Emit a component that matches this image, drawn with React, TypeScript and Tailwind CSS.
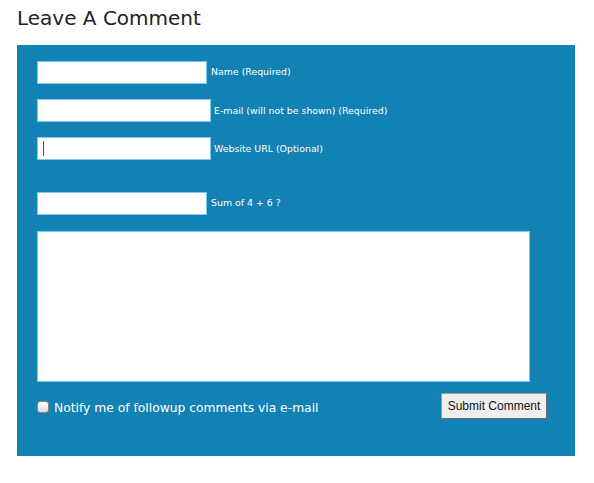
import React from "react";

export default function App() {
  const font = { fontFamily: '"DejaVu Sans", "Noto Sans", sans-serif' };
  return (
    <div className="w-[594px] h-[483px] bg-white" style={font}>
      <div className="pl-[17px] pt-[4px]">
        <h1 className="text-[20px] leading-[28px] text-[#222] font-normal h-[41px]">Leave A Comment</h1>
        <div className="w-[558px] h-[411px] bg-[#1282b4] pl-[20px] pt-[16px] text-white">
          <div className="flex items-center h-[23px]">
            <input className="w-[170px] h-[23px] bg-white border border-[#7ccbed] outline-none" />
            <span className="ml-[4px] text-[9.4px] leading-[12px] -mt-[2px]">Name (Required)</span>
          </div>
          <div className="flex items-center h-[23px] mt-[15px]">
            <input className="w-[174px] h-[23px] bg-white border border-[#7ccbed] outline-none" />
            <span className="ml-[3px] text-[9.4px] leading-[12px]">E-mail (will not be shown) (Required)</span>
          </div>
          <div className="flex items-center h-[23px] mt-[15px]">
            <div className="w-[174px] h-[23px] bg-white border border-[#7ccbed] flex items-center pl-[5px]">
              <div className="w-[1px] h-[15px] bg-[#555]" />
            </div>
            <span className="ml-[3px] text-[9.4px] leading-[12px]">Website URL (Optional)</span>
          </div>
          <div className="flex items-center h-[23px] mt-[32px]">
            <input className="w-[170px] h-[23px] bg-white border border-[#7ccbed] outline-none" />
            <span className="ml-[4px] text-[9.4px] leading-[12px] -mt-[2px]">Sum of 4 + 6 ?</span>
          </div>
          <div className="w-[493px] h-[151px] mt-[16px] bg-white border border-[#7ccbed]" />
          <div className="flex items-start w-[510px] mt-[11px]">
            <div className="flex items-center mt-[7px]">
              <div className="w-[12px] h-[12px] -mt-[2px] rounded-[3px] border border-[#888] bg-gradient-to-b from-white to-[#ddd]" />
              <span className="ml-[5px] text-[12.3px] leading-[16px]">Notify me of followup comments via e-mail</span>
            </div>
            <div className="flex-1" />
            <button
              className="w-[106px] h-[26px] bg-[#efefef] border border-[#999] border-b-[#666] border-r-[#666] text-[12px] text-[#111]"
              style={{ fontFamily: '"Liberation Sans", Arial, sans-serif' }}
            >
              Submit Comment
            </button>
          </div>
        </div>
      </div>
    </div>
  );
}
